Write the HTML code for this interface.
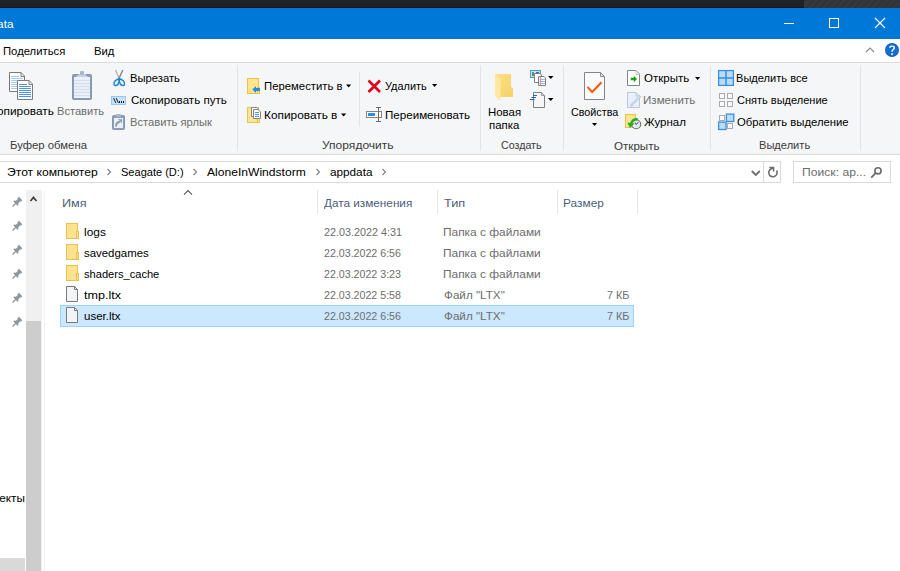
<!DOCTYPE html>
<html><head><meta charset="utf-8"><style>
html,body{margin:0;padding:0;width:900px;height:571px;overflow:hidden;background:#fff;position:relative;font-family:"Liberation Sans",sans-serif}
.t{position:absolute;font-size:12px;line-height:14px;white-space:nowrap;transform-origin:0 0}
.r{position:absolute}
svg{position:absolute;overflow:visible}
</style></head><body>
<div class="r" style="left:0;top:0;width:900px;height:8px;background:#202124"></div>
<div class="r" style="left:804px;top:0;width:96px;height:8px;background:repeating-linear-gradient(135deg,#323438 0 3px,#37393d 3px 5px)"></div>
<div class="r" style="left:0;top:7px;width:804px;height:1px;background:#1b1416"></div>
<div class="r" style="left:0;top:8px;width:900px;height:31px;background:#0078d7"></div>
<div class="r" style="left:0;top:39px;width:900px;height:23px;background:#ffffff"></div>
<div class="r" style="left:0;top:62px;width:900px;height:1px;background:#dadbdc"></div>
<div class="r" style="left:0;top:63px;width:900px;height:91px;background:#f5f6f7"></div>
<div class="r" style="left:0;top:154px;width:900px;height:1px;background:#dadbdc"></div>
<!-- group separators -->
<div class="r" style="left:237px;top:65px;width:1px;height:86px;background:#e2e3e4"></div>
<div class="r" style="left:480px;top:65px;width:1px;height:86px;background:#e2e3e4"></div>
<div class="r" style="left:563px;top:65px;width:1px;height:86px;background:#e2e3e4"></div>
<div class="r" style="left:710px;top:65px;width:1px;height:86px;background:#e2e3e4"></div>
<div class="r" style="left:860px;top:65px;width:1px;height:86px;background:#e2e3e4"></div>
<div class="r" style="left:359px;top:72px;width:1px;height:55px;background:#e2e3e4"></div>
<!-- address bar -->
<div class="r" style="left:-1px;top:161px;width:780px;height:20px;border:1px solid #d9d9d9"></div>
<div class="r" style="left:763px;top:162px;width:1px;height:20px;background:#d9d9d9"></div>
<div class="r" style="left:793px;top:161px;width:96px;height:20px;border:1px solid #d9d9d9"></div>
<!-- nav pane scrollbar -->
<div class="r" style="left:26px;top:190px;width:16px;height:381px;background:#f0f0f0"></div>
<div class="r" style="left:26px;top:321px;width:15px;height:250px;background:#cdcdcd"></div>
<div class="r" style="left:44px;top:190px;width:1px;height:381px;background:#f0f0f0"></div>
<div class="r" style="left:0;top:558px;width:25px;height:13px;background:#d9d9d9"></div>
<!-- header separators -->
<div class="r" style="left:317px;top:190px;width:1px;height:24px;background:#e5e5e5"></div>
<div class="r" style="left:437px;top:190px;width:1px;height:24px;background:#e5e5e5"></div>
<div class="r" style="left:557px;top:190px;width:1px;height:24px;background:#e5e5e5"></div>
<div class="r" style="left:637px;top:190px;width:1px;height:24px;background:#e5e5e5"></div>
<!-- selection -->
<div class="r" style="left:60px;top:305px;width:572px;height:20px;background:#cce8ff;border:1px solid #99d1ff"></div>
<svg style="left:770px;top:10px" width="130" height="28" viewBox="770 10 130 28"><rect x="784" y="23" width="10" height="1" fill="#fff"/><rect x="829.5" y="18.5" width="9" height="9" fill="none" stroke="#fff" stroke-width="1"/><path d="M875,18 L885,28 M885,18 L875,28" stroke="#fff" stroke-width="1.1" fill="none"/></svg>
<svg style="left:850px;top:40px" width="50" height="22" viewBox="850 40 50 22"><path d="M866,52 L870,48 L874,52" stroke="#8a8a8a" stroke-width="1.1" fill="none"/><circle cx="892" cy="50" r="7" fill="#1a5db0"/><circle cx="892" cy="50" r="6.1" fill="#0f6fd6"/><path d="M889.8,47.8 C889.8,45.5 894.3,45.5 894.3,47.8 C894.3,49.6 892,49.5 892,51.8" stroke="#fff" stroke-width="1.4" fill="none"/><rect x="891.2" y="53.2" width="1.7" height="1.7" fill="#fff"/></svg>
<svg style="left:0px;top:60px" width="40" height="45" viewBox="0 60 40 45"><path d="M9.5,72.5 H21 L24.5,76 V91.5 H9.5 Z" fill="#fff" stroke="#7b7b7b"/><path d="M21,72.5 V76.5 H24.5" fill="none" stroke="#7b7b7b"/><path d="M11,76.5 H19 M11,78.5 H23 M11,80.5 H23 M11,82.5 H17 M11,84.5 H17 M11,86.5 H17 M11,88.5 H17" stroke="#a9c9f2"/><path d="M17.5,80.5 H29 L32.5,84 V99.5 H17.5 Z" fill="#fff" stroke="#7b7b7b"/><path d="M29,80.5 V84.5 H32.5" fill="none" stroke="#7b7b7b"/><path d="M19,84.5 H27 M19,86.5 H31 M19,88.5 H31 M19,90.5 H31 M19,92.5 H31 M19,94.5 H31 M19,96.5 H31" stroke="#4d94ea"/></svg>
<svg style="left:60px;top:60px" width="40" height="45" viewBox="60 60 40 45"><rect x="72.5" y="74.5" width="19" height="25" rx="1" fill="#8e9db5" stroke="#8797b0"/><rect x="74" y="77" width="16" height="21" fill="#eaf0f9"/><path d="M74,80.5 H90 M74,83.5 H90 M74,86.5 H90 M74,89.5 H90 M74,92.5 H90 M74,95.5 H90" stroke="#d6deea"/><path d="M76,77 L79,74 H85 L88,77 Z" fill="#c5d0e2"/><rect x="80" y="71" width="4" height="4" rx="1" fill="#a9b6ca"/></svg>
<svg style="left:108px;top:66px" width="24" height="24" viewBox="108 66 24 24"><path d="M115.5,70 L119.5,79" stroke="#b5b5b5" stroke-width="1.4" fill="none"/><path d="M122.8,70 L118.8,79" stroke="#7d8594" stroke-width="1.4" fill="none"/><path d="M119.5,79 C116,79 113.5,82 114,84.5 C114.5,86 117,86 118.2,84 C119,82.5 119.3,80.5 119.5,79 Z" fill="none" stroke="#1a86d2" stroke-width="1.5"/><path d="M119,79 C122.5,79 125,82 124.5,84.5 C124,86 121.5,86 120.3,84 C119.5,82.5 119.2,80.5 119,79 Z" fill="none" stroke="#1a86d2" stroke-width="1.5"/></svg>
<svg style="left:108px;top:90px" width="24" height="20" viewBox="108 90 24 20"><rect x="111.5" y="96.5" width="14" height="8" fill="#c3e2fb" stroke="#98c8ef"/><path d="M113.6,98.2 L115.8,102.8 M116.2,98.2 L118.4,102.8" stroke="#1a1a1a" stroke-width="1"/><rect x="119" y="101" width="1" height="2" fill="#1a1a1a"/><rect x="121" y="101" width="1" height="2" fill="#1a1a1a"/><rect x="123" y="101" width="1" height="2" fill="#1a1a1a"/></svg>
<svg style="left:108px;top:110px" width="24" height="22" viewBox="108 110 24 22"><rect x="112.5" y="115.5" width="12" height="14" rx="1" fill="#8e9db5" stroke="#8797b0"/><rect x="114" y="118" width="9" height="10" fill="#eaf0f9"/><rect x="116" y="114" width="5" height="3" rx="0.8" fill="#a9b6ca"/><path d="M116,126.5 C116,123.5 117,122.2 120,121.8" stroke="#8e9db5" stroke-width="2" fill="none"/><path d="M118.2,119 L122.2,119.2 L121.8,123.6 Z" fill="#8e9db5"/></svg>
<svg style="left:240px;top:74px" width="24" height="24" viewBox="240 74 24 24"><rect x="247.5" y="78.5" width="11" height="15" fill="#fde48f" stroke="#e8c44e"/><rect x="257.5" y="87.5" width="2" height="6" fill="#fde48f" stroke="#e8c44e"/><path d="M252.4,89.5 L256,86 V88 H260 V91 H256 V93 Z" fill="#2b8be2"/></svg>
<svg style="left:240px;top:104px" width="24" height="24" viewBox="240 104 24 24"><rect x="247.5" y="107.5" width="11" height="15" fill="#fde48f" stroke="#e8c44e"/><rect x="257.5" y="116.5" width="2" height="6" fill="#fde48f" stroke="#e8c44e"/><path d="M251.5,107.5 H257 L258.5,109 V116.5 H251.5 Z" fill="#fff" stroke="#858585"/><path d="M253.5,109.5 H258 L260.5,112 V118.5 H253.5 Z" fill="#fff" stroke="#858585"/><path d="M255,112.5 H259 M255,114.5 H259 M255,116.5 H259" stroke="#4a94ea" stroke-width="1.1"/></svg>
<svg style="left:362px;top:76px" width="24" height="20" viewBox="362 76 24 20"><path d="M368.5,80.5 L380,92 M380,80.5 L368.5,92" stroke="#e0001b" stroke-width="2.6" fill="none"/></svg>
<svg style="left:362px;top:104px" width="24" height="20" viewBox="362 104 24 20"><rect x="366.5" y="111.5" width="15" height="6" fill="#fff" stroke="#858585"/><rect x="368" y="113" width="7" height="3" rx="0.5" fill="#2b8be2"/><path d="M378.5,107.5 V121.5 M376,107.5 H381 M376,121.5 H381" stroke="#6b6b6b" stroke-width="1"/></svg>
<svg style="left:490px;top:70px" width="30" height="34" viewBox="490 70 30 34"><defs><linearGradient id="fg" x1="0" y1="0" x2="1" y2="1"><stop offset="0" stop-color="#fbe08a"/><stop offset="1" stop-color="#f6d163"/></linearGradient></defs><path d="M495,74 H511 V87 L513,88.5 V97 H500 Z" fill="url(#fg)"/><path d="M495,74 L500.5,79.5 V101 L495,96 Z" fill="#fce7a3"/></svg>
<svg style="left:526px;top:68px" width="30" height="20" viewBox="526 68 30 20"><rect x="530.5" y="70.5" width="10" height="7" fill="#c4e2f6" stroke="#4a9ad6"/><rect x="532" y="72" width="2" height="4" fill="#6a8f5a"/><rect x="536" y="72" width="3" height="2" fill="#2f6f9f"/><path d="M534.5,73.5 H540 L541.5,75 V82.5 H534.5 Z" fill="#fff" stroke="#808080"/><path d="M538.5,76.5 H544 L545.5,78 V85.5 H538.5 Z" fill="#fff" stroke="#808080"/><path d="M539.5,79.5 H545 M539.5,81.5 H545 M539.5,83.5 H545" stroke="#8fbdf0"/><path d="M540.5,77 V85" stroke="#f08a8a"/><path d="M548,76 H553.5 L550.75,79 Z" fill="#000"/></svg>
<svg style="left:526px;top:90px" width="30" height="20" viewBox="526 90 30 20"><path d="M533.5,92.5 H541.5 L544.5,95.5 V107.5 H533.5 Z" fill="#f6f6f6" stroke="#808080"/><path d="M541.5,92.5 V95.5 H544.5 Z" fill="#e6e6e6" stroke="#9a9a9a"/><path d="M533,95.5 H537 M531.5,97.5 H536 M530,99.5 H534.5" stroke="#1f62c2" stroke-width="1.2"/><path d="M548,98 H553.5 L550.75,101 Z" fill="#000"/></svg>
<svg style="left:580px;top:70px" width="30" height="60" viewBox="580 70 30 60"><path d="M584.5,72.5 H600.5 L604.5,76.5 V99.5 H584.5 Z" fill="#fafafa" stroke="#858585"/><path d="M600.5,72.5 V76.5 H604.5 Z" fill="#e4e4e4" stroke="#8a8a8a"/><path d="M587.5,87 L592.2,92 L601.5,82.2" stroke="#f25a12" stroke-width="2" fill="none"/><path d="M592,123 H597.2 L594.6,126 Z" fill="#000"/></svg>
<svg style="left:620px;top:68px" width="90" height="20" viewBox="620 68 90 20"><path d="M627.5,70.5 H636 L639.5,74 V85.5 H627.5 Z" fill="#fff" stroke="#858585"/><path d="M636,70.5 V74.5 H639.5" fill="none" stroke="#c4c4c4"/><path d="M630.8,77.8 H633.8 V75.8 L637,79 L633.8,82.2 V80.2 H630.8 Z" fill="#16a016"/><path d="M695,77 H700.2 L697.6,80 Z" fill="#000"/></svg>
<svg style="left:620px;top:90px" width="30" height="20" viewBox="620 90 30 20"><path d="M627.5,92.5 H636 L639.5,96 V107.5 H627.5 Z" fill="#e9f0fa" stroke="#b9c8de"/><path d="M636,92.5 V96 H639.5" fill="none" stroke="#b9c8de"/><path d="M630.5,106 L640.5,96" stroke="#b9c8de" stroke-width="2.4" fill="none"/><path d="M631.2,105.3 L640,96.5" stroke="#e4ebf5" stroke-width="0.8" fill="none"/></svg>
<svg style="left:620px;top:110px" width="30" height="22" viewBox="620 110 30 22"><rect x="625.5" y="114.5" width="10" height="13" fill="#fde48f" stroke="#e8c44e"/><circle cx="636.2" cy="124.3" r="4.5" fill="#e6ebf1" stroke="#6f6f6f" stroke-width="1.1"/><path d="M636.2,124.6 L635.2,122.6 M636.2,124.6 L638.6,122" stroke="#333" stroke-width="0.9" fill="none"/><path d="M637.8,119.4 C634.5,119 632,120.8 631.2,123.8" stroke="#21b021" stroke-width="2.4" fill="none"/><path d="M627.4,122.6 L634.6,123.4 L629.8,127.8 Z" fill="#21b021"/></svg>
<svg style="left:714px;top:66px" width="24" height="24" viewBox="714 66 24 24"><rect x="718.6" y="70.6" width="14.8" height="14.8" fill="#b9ddf9" stroke="#3a8fe0" stroke-width="1.3"/><path d="M726,70.5 V85.5 M718.5,78 H733.5" stroke="#3a8fe0" stroke-width="1.5"/></svg>
<svg style="left:714px;top:88px" width="24" height="24" viewBox="714 88 24 24"><rect x="719.5" y="93.5" width="5" height="5" fill="#fafafa" stroke="#aaaaaa"/><rect x="727.5" y="93.5" width="5" height="5" fill="#fafafa" stroke="#aaaaaa"/><rect x="719.5" y="101.5" width="5" height="5" fill="#fafafa" stroke="#aaaaaa"/><rect x="727.5" y="101.5" width="5" height="5" fill="#fafafa" stroke="#aaaaaa"/></svg>
<svg style="left:714px;top:110px" width="24" height="24" viewBox="714 110 24 24"><rect x="719.5" y="115.5" width="5" height="5" fill="#fafafa" stroke="#aaaaaa"/><rect x="727.5" y="123.5" width="5" height="5" fill="#fafafa" stroke="#aaaaaa"/><rect x="726.4" y="114.1" width="7.4" height="7.4" fill="#b9ddf9" stroke="#3a8fe0" stroke-width="1.3"/><rect x="718.6" y="122.1" width="7.4" height="7.4" fill="#b9ddf9" stroke="#3a8fe0" stroke-width="1.3"/></svg>
<svg style="left:0px;top:160px" width="400" height="25" viewBox="0 160 400 25"><path d="M107.5,169 L110.5,172 L107.5,175" stroke="#7f7f7f" stroke-width="1.1" fill="none"/><path d="M193.5,169 L196.5,172 L193.5,175" stroke="#7f7f7f" stroke-width="1.1" fill="none"/><path d="M316.5,169 L319.5,172 L316.5,175" stroke="#7f7f7f" stroke-width="1.1" fill="none"/><path d="M382.5,169 L385.5,172 L382.5,175" stroke="#7f7f7f" stroke-width="1.1" fill="none"/></svg>
<svg style="left:745px;top:160px" width="40" height="25" viewBox="745 160 40 25"><path d="M751.8,171 L755.8,175 L759.8,171" stroke="#6e6e6e" stroke-width="1.8" fill="none"/><path d="M773,168.4 A4.2,4.2 0 1 0 776.6,170.5" stroke="#6e6e6e" stroke-width="1.6" fill="none"/><path d="M769.3,167.4 H773.6 V171.6" stroke="#6e6e6e" stroke-width="1.5" fill="none"/></svg>
<svg style="left:865px;top:160px" width="25" height="25" viewBox="865 160 25 25"><circle cx="878" cy="170.8" r="3.1" stroke="#6a6a6a" stroke-width="1.6" fill="none"/><path d="M875.6,173.2 L871.2,177.6" stroke="#6a6a6a" stroke-width="1.8"/></svg>
<svg style="left:0px;top:190px" width="26" height="140" viewBox="0 190 26 140"><g transform="translate(12.6,206.5) rotate(-45)"><path d="M0,0 H4.5" stroke="#8e989f" stroke-width="1.3"/><path d="M4,-3 L5.5,-3 L6.3,-1.7 L9,-1.7 L9,-2.4 L11.4,-2.4 L11.4,2.4 L9,2.4 L9,1.7 L6.3,1.7 L5.5,3 L4,3 Z" fill="#8e989f"/></g><g transform="translate(12.6,230.5) rotate(-45)"><path d="M0,0 H4.5" stroke="#8e989f" stroke-width="1.3"/><path d="M4,-3 L5.5,-3 L6.3,-1.7 L9,-1.7 L9,-2.4 L11.4,-2.4 L11.4,2.4 L9,2.4 L9,1.7 L6.3,1.7 L5.5,3 L4,3 Z" fill="#8e989f"/></g><g transform="translate(12.6,254.5) rotate(-45)"><path d="M0,0 H4.5" stroke="#8e989f" stroke-width="1.3"/><path d="M4,-3 L5.5,-3 L6.3,-1.7 L9,-1.7 L9,-2.4 L11.4,-2.4 L11.4,2.4 L9,2.4 L9,1.7 L6.3,1.7 L5.5,3 L4,3 Z" fill="#8e989f"/></g><g transform="translate(12.6,278.5) rotate(-45)"><path d="M0,0 H4.5" stroke="#8e989f" stroke-width="1.3"/><path d="M4,-3 L5.5,-3 L6.3,-1.7 L9,-1.7 L9,-2.4 L11.4,-2.4 L11.4,2.4 L9,2.4 L9,1.7 L6.3,1.7 L5.5,3 L4,3 Z" fill="#8e989f"/></g><g transform="translate(12.6,302.5) rotate(-45)"><path d="M0,0 H4.5" stroke="#8e989f" stroke-width="1.3"/><path d="M4,-3 L5.5,-3 L6.3,-1.7 L9,-1.7 L9,-2.4 L11.4,-2.4 L11.4,2.4 L9,2.4 L9,1.7 L6.3,1.7 L5.5,3 L4,3 Z" fill="#8e989f"/></g><g transform="translate(12.6,326.5) rotate(-45)"><path d="M0,0 H4.5" stroke="#8e989f" stroke-width="1.3"/><path d="M4,-3 L5.5,-3 L6.3,-1.7 L9,-1.7 L9,-2.4 L11.4,-2.4 L11.4,2.4 L9,2.4 L9,1.7 L6.3,1.7 L5.5,3 L4,3 Z" fill="#8e989f"/></g></svg>
<svg style="left:26px;top:192px" width="16" height="14" viewBox="26 192 16 14"><path d="M30.5,201 L33.5,197.5 L36.5,201" stroke="#404040" stroke-width="1.8" fill="none"/></svg>
<svg style="left:180px;top:188px" width="16" height="10" viewBox="180 188 16 10"><path d="M184,194.6 L188,190.6 L192,194.6" stroke="#555" stroke-width="1.1" fill="none"/></svg>
<svg style="left:60px;top:218px" width="24" height="112" viewBox="60 218 24 112"><rect x="66.5" y="223.5" width="11" height="15" fill="#fde38e" stroke="#e6c14f"/><rect x="76.5" y="231.5" width="2" height="7" fill="#fde38e" stroke="#e6c14f"/><rect x="66.5" y="244.5" width="11" height="15" fill="#fde38e" stroke="#e6c14f"/><rect x="76.5" y="252.5" width="2" height="7" fill="#fde38e" stroke="#e6c14f"/><rect x="66.5" y="265.5" width="11" height="15" fill="#fde38e" stroke="#e6c14f"/><rect x="76.5" y="273.5" width="2" height="7" fill="#fde38e" stroke="#e6c14f"/><path d="M66.5,286.5 H74.5 L77.5,289.5 V301.5 H66.5 Z" fill="#f3f4f6" stroke="#7a7a7a"/><path d="M74.5,286.5 V289.5 H77.5" fill="none" stroke="#7a7a7a"/><path d="M66.5,307.5 H74.5 L77.5,310.5 V322.5 H66.5 Z" fill="#f3f4f6" stroke="#7a7a7a"/><path d="M74.5,307.5 V310.5 H77.5" fill="none" stroke="#7a7a7a"/></svg>
<svg style="left:330px;top:80px" width="110" height="40" viewBox="330 80 110 40"><path d="M346,84.5 H351.2 L348.6,87.5 Z" fill="#000"/><path d="M341,113.5 H346.2 L343.6,116.5 Z" fill="#000"/><path d="M432,84 H437.2 L434.6,87 Z" fill="#000"/></svg>
<div class="t" style="left:2.67px;top:45.00px;font-size:11px;line-height:13px;color:#000000;transform:scaleX(1.0254)">Поделиться</div>
<div class="t" style="left:93.67px;top:45.00px;font-size:11px;line-height:13px;color:#000000;transform:scaleX(1.0263)">Вид</div>
<div class="t" style="left:57.39px;top:105.00px;font-size:11px;line-height:13px;color:#6d6d6d;transform:scaleX(1.0087)">Вставить</div>
<div class="t" style="left:10.37px;top:139.40px;font-size:11px;line-height:13px;color:#3a3a3a;transform:scaleX(1.0297)">Буфер обмена</div>
<div class="t" style="left:129.68px;top:72.40px;font-size:11px;line-height:13px;color:#000000;transform:scaleX(1.0208)">Вырезать</div>
<div class="t" style="left:130.70px;top:93.80px;font-size:11px;line-height:13px;color:#000000;transform:scaleX(1.0527)">Скопировать путь</div>
<div class="t" style="left:129.68px;top:116.20px;font-size:11px;line-height:13px;color:#6d6d6d;transform:scaleX(1.0163)">Вставить ярлык</div>
<div class="t" style="left:263.57px;top:79.80px;font-size:11px;line-height:13px;color:#000000;transform:scaleX(1.0307)">Переместить в</div>
<div class="t" style="left:263.52px;top:109.20px;font-size:11px;line-height:13px;color:#000000;transform:scaleX(1.0776)">Копировать в</div>
<div class="t" style="left:385.00px;top:80.20px;font-size:11px;line-height:13px;color:#000000;transform:scaleX(0.9929)">Удалить</div>
<div class="t" style="left:384.65px;top:108.60px;font-size:11px;line-height:13px;color:#000000;transform:scaleX(1.0538)">Переименовать</div>
<div class="t" style="left:321.70px;top:139.30px;font-size:11px;line-height:13px;color:#3a3a3a;transform:scaleX(1.0938)">Упорядочить</div>
<div class="t" style="left:488.36px;top:105.70px;font-size:11px;line-height:13px;color:#000000;transform:scaleX(1.0387)">Новая</div>
<div class="t" style="left:500.80px;top:139.30px;font-size:11px;line-height:13px;color:#3a3a3a;transform:scaleX(0.9690)">Создать</div>
<div class="t" style="left:570.70px;top:105.70px;font-size:11px;line-height:13px;color:#000000;transform:scaleX(0.9776)">Свойства</div>
<div class="t" style="left:644.40px;top:71.80px;font-size:11px;line-height:13px;color:#000000;transform:scaleX(1.0488)">Открыть</div>
<div class="t" style="left:643.35px;top:94.20px;font-size:11px;line-height:13px;color:#6d6d6d;transform:scaleX(1.0531)">Изменить</div>
<div class="t" style="left:643.90px;top:115.70px;font-size:11px;line-height:13px;color:#000000;transform:scaleX(1.0450)">Журнал</div>
<div class="t" style="left:613.70px;top:139.60px;font-size:11px;line-height:13px;color:#3a3a3a;transform:scaleX(1.0535)">Открыть</div>
<div class="t" style="left:736.29px;top:71.70px;font-size:11px;line-height:13px;color:#000000;transform:scaleX(1.0071)">Выделить все</div>
<div class="t" style="left:737.30px;top:93.90px;font-size:11px;line-height:13px;color:#000000;transform:scaleX(1.0011)">Снять выделение</div>
<div class="t" style="left:737.30px;top:115.70px;font-size:11px;line-height:13px;color:#000000;transform:scaleX(1.0275)">Обратить выделение</div>
<div class="t" style="left:758.59px;top:139.30px;font-size:11px;line-height:13px;color:#3a3a3a;transform:scaleX(1.0080)">Выделить</div>
<div class="t" style="left:7.10px;top:166.00px;font-size:11px;line-height:13px;color:#000000;transform:scaleX(1.1025)">Этот компьютер</div>
<div class="t" style="left:121.10px;top:166.00px;font-size:11px;line-height:13px;color:#000000;transform:scaleX(1.0032)">Seagate (D:)</div>
<div class="t" style="left:207.30px;top:166.00px;font-size:11px;line-height:13px;color:#000000;transform:scaleX(1.0989)">AloneInWindstorm</div>
<div class="t" style="left:330.00px;top:166.00px;font-size:11px;line-height:13px;color:#000000;transform:scaleX(1.0675)">appdata</div>
<div class="t" style="left:801.60px;top:166.00px;font-size:11px;line-height:13px;color:#6d6d6d;transform:scaleX(1.1036)">Поиск: ар...</div>
<div class="t" style="left:62.15px;top:196.70px;font-size:11px;line-height:13px;color:#4c607a;transform:scaleX(1.1500)">Имя</div>
<div class="t" style="left:324.40px;top:197.20px;font-size:11px;line-height:13px;color:#4c607a;transform:scaleX(1.0683)">Дата изменения</div>
<div class="t" style="left:444.10px;top:197.20px;font-size:11px;line-height:13px;color:#4c607a;transform:scaleX(1.1556)">Тип</div>
<div class="t" style="left:562.82px;top:197.20px;font-size:11px;line-height:13px;color:#4c607a;transform:scaleX(1.0811)">Размер</div>
<div class="t" style="left:84.30px;top:226.00px;font-size:11px;line-height:13px;color:#000000;transform:scaleX(1.0850)">logs</div>
<div class="t" style="left:84.30px;top:247.00px;font-size:11px;line-height:13px;color:#000000;transform:scaleX(1.0371)">savedgames</div>
<div class="t" style="left:84.30px;top:268.00px;font-size:11px;line-height:13px;color:#000000;transform:scaleX(1.0093)">shaders_cache</div>
<div class="t" style="left:84.30px;top:289.00px;font-size:11px;line-height:13px;color:#000000;transform:scaleX(1.1438)">tmp.ltx</div>
<div class="t" style="left:84.30px;top:310.00px;font-size:11px;line-height:13px;color:#000000;transform:scaleX(1.0457)">user.ltx</div>
<div class="t" style="left:324.40px;top:226.00px;font-size:11px;line-height:13px;color:#6d6d6d;transform:scaleX(0.9797)">22.03.2022 4:31</div>
<div class="t" style="left:324.40px;top:247.00px;font-size:11px;line-height:13px;color:#6d6d6d;transform:scaleX(0.9675)">22.03.2022 6:56</div>
<div class="t" style="left:324.40px;top:268.00px;font-size:11px;line-height:13px;color:#6d6d6d;transform:scaleX(0.9675)">22.03.2022 3:23</div>
<div class="t" style="left:324.40px;top:289.00px;font-size:11px;line-height:13px;color:#6d6d6d;transform:scaleX(0.9675)">22.03.2022 5:58</div>
<div class="t" style="left:324.40px;top:310.00px;font-size:11px;line-height:13px;color:#6d6d6d;transform:scaleX(0.9675)">22.03.2022 6:56</div>
<div class="t" style="left:443.02px;top:226.00px;font-size:11px;line-height:13px;color:#6d6d6d;transform:scaleX(1.0820)">Папка с файлами</div>
<div class="t" style="left:443.02px;top:247.00px;font-size:11px;line-height:13px;color:#6d6d6d;transform:scaleX(1.0820)">Папка с файлами</div>
<div class="t" style="left:443.02px;top:268.00px;font-size:11px;line-height:13px;color:#6d6d6d;transform:scaleX(1.0820)">Папка с файлами</div>
<div class="t" style="left:444.10px;top:289.00px;font-size:11px;line-height:13px;color:#6d6d6d;transform:scaleX(1.0614)">Файл "LTX"</div>
<div class="t" style="left:444.10px;top:310.00px;font-size:11px;line-height:13px;color:#6d6d6d;transform:scaleX(1.0614)">Файл "LTX"</div>
<div class="t" style="left:606.60px;top:289.00px;font-size:11px;line-height:13px;color:#6d6d6d;transform:scaleX(0.9826)">7 КБ</div>
<div class="t" style="left:606.60px;top:310.00px;font-size:11px;line-height:13px;color:#6d6d6d;transform:scaleX(0.9826)">7 КБ</div>
<div class="t" style="left:-29.00px;top:17.70px;font-size:11px;line-height:13px;color:#ffffff;transform:scaleX(1.0675)">appdata</div>
<div class="t" style="left:-10.28px;top:105.00px;font-size:11px;line-height:13px;color:#000000;transform:scaleX(1.0776)">Копировать</div>
<div class="t" style="left:489.40px;top:118.70px;font-size:11px;line-height:13px;color:#000000;transform:scaleX(1.0387)">папка</div>
<div class="t" style="left:-21.24px;top:491.80px;font-size:11px;line-height:13px;color:#000000;transform:scaleX(1.0683)">объекты</div>
</body></html>
